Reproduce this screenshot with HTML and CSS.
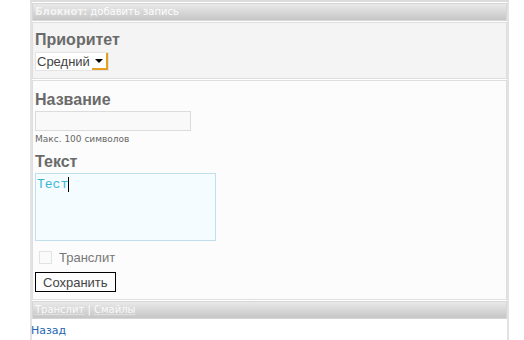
FILE: index.html
```html
<!DOCTYPE html>
<html lang="ru">
<head>
    <meta charset="UTF-8">
    <title>Блокнот</title>
    <link rel="stylesheet" href="styles.css">
</head>
<body>
    <div class="wrap">
        <div class="bar head"><b>Блокнот:</b> добавить запись</div>

        <div class="box gray">
            <h2>Приоритет</h2>
            <div class="select">
                <span class="select-text">Средний</span>
                <span class="select-btn"><span class="arrow"></span></span>
            </div>
        </div>

        <div class="box light">
            <h2>Название</h2>
            <div class="input"></div>
            <div class="hint">Макс. 100 символов</div>

            <h2 class="second">Текст</h2>
            <div class="textarea"><span class="typed">Тест</span><span class="caret"></span></div>

            <label class="check">
                <span class="checkbox"></span>
                <span>Транслит</span>
            </label>

            <button class="save">Сохранить</button>
        </div>

        <div class="bar foot"><a href="#">Транслит</a> | <a href="#">Смайлы</a></div>

        <a class="back" href="#">Назад</a>
    </div>
</body>
</html>
```

FILE: styles.css
```css
body {
    margin: 0;
    padding: 0;
    background-color: #fff;
    font-family: "Liberation Sans", Arial, sans-serif;
    font-size: 13px;
    color: #555;
}
.wrap {
    margin-left: 30px;
    width: 479px;
    min-height: 340px;
    border-left: 2px solid #e2e2e2;
    border-right: 2px solid #e2e2e2;
    border-top: 2px solid #dcdcdc;
    box-sizing: border-box;
}
.bar {
    margin-top: 1px;
    height: 16px;
    line-height: 16px;
    padding-left: 2px;
    border: 1px solid #d6d6d6;
    background: linear-gradient(#e9e9e9, #c6c6c6);
    font-family: "DejaVu Sans", Verdana, sans-serif;
    font-size: 10px;
    color: #fdfdfd;
    white-space: nowrap;
}
.bar b {
    color: #f4f4f4;
}
.bar a {
    color: #fafafa;
    text-decoration: underline;
    text-decoration-color: #e0e0e0;
}
.box {
    margin-top: 1px;
    border: 1px solid #dedede;
    padding: 0 2px;
}
.box.gray {
    background-color: #f4f4f4;
    padding-top: 8px;
    padding-bottom: 7px;
}
.box.light {
    background-color: #fcfcfc;
    padding-top: 10px;
    padding-bottom: 7px;
}
h2 {
    margin: 0;
    font-family: "Liberation Sans", Arial, sans-serif;
    font-size: 16px;
    line-height: 17px;
    font-weight: bold;
    color: #6a6a6a;
}
h2.second {
    margin-top: 8px;
}
.select {
    display: inline-flex;
    align-items: stretch;
    margin-top: 4px;
    height: 19px;
    box-sizing: border-box;
    border: 1px solid #e4e4e4;
    background-color: #fff;
    vertical-align: top;
}
.select-text {
    padding: 0 2px 0 1px;
    line-height: 17px;
    color: #444;
}
.select-btn {
    width: 16px;
    display: flex;
    align-items: center;
    justify-content: center;
    border-right: 2px solid #e3a020;
    border-bottom: 2px solid #e3a020;
    background-color: #fff;
    box-sizing: border-box;
}
.arrow {
    width: 0;
    height: 0;
    border-left: 4px solid transparent;
    border-right: 4px solid transparent;
    border-top: 4px solid #000;
}
.input {
    margin-top: 3px;
    width: 156px;
    height: 20px;
    box-sizing: border-box;
    border: 1px solid #dcdcdc;
    background-color: #f9f9f9;
}
.hint {
    margin-top: 2px;
    font-size: 9px;
    line-height: 12px;
    color: #666;
    font-family: "DejaVu Sans", Verdana, sans-serif;
}
.textarea {
    margin-top: 3px;
    width: 181px;
    height: 68px;
    box-sizing: border-box;
    border: 1px solid #bfe0ea;
    background-color: #f5fcff;
    padding: 3px 1px;
    font-family: "Liberation Mono", "Courier New", monospace;
    font-size: 13px;
    line-height: 15px;
    color: #39b7d6;
}
.caret {
    display: inline-block;
    width: 1px;
    height: 15px;
    background-color: #000;
    vertical-align: top;
}
.check {
    display: flex;
    align-items: center;
    gap: 7px;
    height: 14px;
    margin-top: 9px;
    padding-left: 4px;
    color: #777;
}
.checkbox {
    width: 11px;
    height: 11px;
    border: 1px solid #e2e2e2;
    background-color: #fafafa;
}
.save {
    display: block;
    margin-top: 8px;
    height: 20px;
    padding: 0 7px;
    border: 1px solid #000;
    background-color: #fdfdfd;
    font-family: "Liberation Sans", Arial, sans-serif;
    font-size: 13px;
    color: #444;
}
.foot {
    margin-top: 1px;
}
.back {
    display: block;
    margin-top: 5px;
    margin-left: -1px;
    font-family: "DejaVu Sans", Verdana, sans-serif;
    font-size: 11px;
    line-height: 14px;
    color: #1f66b2;
    text-decoration: none;
}
```
